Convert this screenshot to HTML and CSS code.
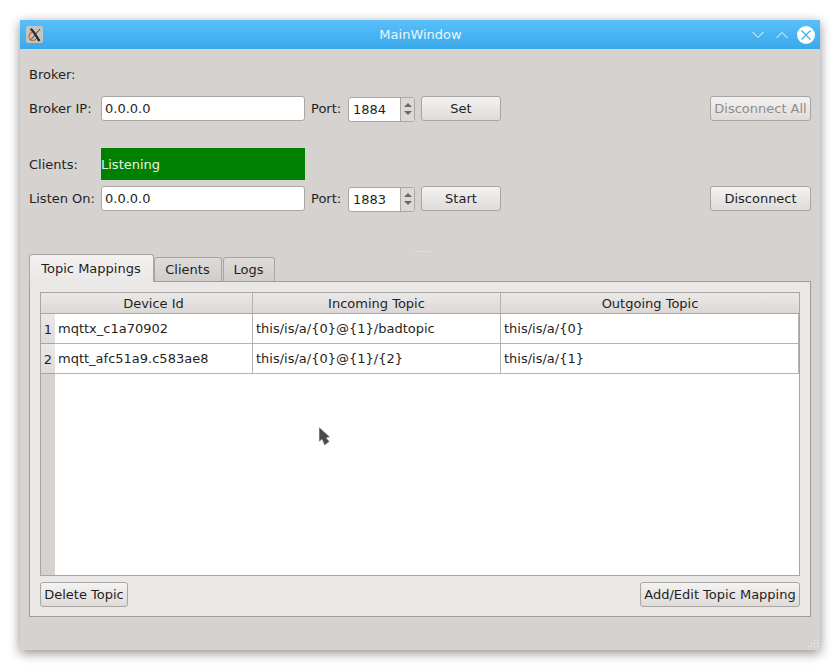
FILE: index.html
```html
<!DOCTYPE html>
<html lang="en">
<head>
<meta charset="utf-8">
<title>MainWindow</title>
<link rel="stylesheet" href="styles.css">
</head>
<body>
<div class="window">
  <header class="titlebar">
    <div class="app-icon">
      <svg width="16" height="16" viewBox="0 0 16 16"><path d="M7 5 C2 5 1 10 3 12.500 C5 14.500 8 13 9 12" fill="none" stroke="#e0672e" stroke-width="1.300"/><path d="M3.500 2 C7 3.500 8.500 9 12.500 14" fill="none" stroke="#2b2b2b" stroke-width="2.400"/><path d="M13 2 L4 12.500" fill="none" stroke="#3a3a3a" stroke-width="1"/></svg>
    </div>
    <div class="title">MainWindow</div>
    <div class="win-controls">
      <svg class="wc" width="12" height="8" viewBox="0 0 12 8"><path d="M.5 1 L6 6.500 L11.500 1" fill="none" stroke="#fff" stroke-width="1"/></svg>
      <svg class="wc" width="12" height="8" viewBox="0 0 12 8"><path d="M.5 7 L6 1.500 L11.500 7" fill="none" stroke="#fff" stroke-width="1"/></svg>
      <svg class="wc-close" width="18" height="18" viewBox="0 0 18 18"><circle cx="9" cy="9" r="9" fill="#fff"/><path d="M4.500 4.500 L13.500 13.500 M13.500 4.500 L4.500 13.500" stroke="#3daee9" stroke-width="1.200"/></svg>
    </div>
  </header>
  <main class="content">
    <div class="broker-heading">Broker:</div>
    <div class="form-row">
      <label class="field-label">Broker IP:</label>
      <div class="line-input">0.0.0.0</div>
      <label class="port-label">Port:</label>
      <div class="spin"><span class="spin-value">1884</span><span class="spin-btns"><i class="arrow-up"></i><i class="arrow-down"></i></span></div>
      <button class="btn btn-action">Set</button>
      <span class="spacer"></span>
      <button class="btn btn-side" disabled>Disconnect All</button>
    </div>
    <div class="status-row">
      <label class="field-label">Clients:</label>
      <div class="status">Listening</div>
    </div>
    <div class="form-row">
      <label class="field-label">Listen On:</label>
      <div class="line-input">0.0.0.0</div>
      <label class="port-label">Port:</label>
      <div class="spin"><span class="spin-value">1883</span><span class="spin-btns"><i class="arrow-up"></i><i class="arrow-down"></i></span></div>
      <button class="btn btn-action">Start</button>
      <span class="spacer"></span>
      <button class="btn btn-side">Disconnect</button>
    </div>
    <div class="splitter"></div>
    <div class="tabs">
      <div class="tab tab-active">Topic Mappings</div>
      <div class="tab tab-clients">Clients</div>
      <div class="tab tab-logs">Logs</div>
    </div>
    <section class="pane">
      <div class="table">
        <div class="thead">
          <div class="corner"></div>
          <div class="th col-a">Device Id</div>
          <div class="th col-b">Incoming Topic</div>
          <div class="th col-c">Outgoing Topic</div>
        </div>
        <div class="tbody">
          <div class="tr">
            <div class="row-head">1</div>
            <div class="td col-a">mqttx_c1a70902</div>
            <div class="td col-b">this/is/a/{0}@{1}/badtopic</div>
            <div class="td col-c">this/is/a/{0}</div>
          </div>
          <div class="tr">
            <div class="row-head">2</div>
            <div class="td col-a">mqtt_afc51a9.c583ae8</div>
            <div class="td col-b">this/is/a/{0}@{1}/{2}</div>
            <div class="td col-c">this/is/a/{1}</div>
          </div>
        </div>
      </div>
      <div class="pane-actions">
        <button class="btn btn-delete">Delete Topic</button>
        <button class="btn btn-add">Add/Edit Topic Mapping</button>
      </div>
    </section>
  </main>
  <svg class="cursor" width="14" height="22" viewBox="0 0 14 22"><path d="M1 1 L1 16 L4 13.500 L6.500 19.500 L11.500 15.500 L8.500 12 L12 11 Z" fill="#4a4a4a" stroke="#eeeeee" stroke-width=".6"/></svg>
  <svg class="grip" width="11" height="11" viewBox="0 0 11 11" fill="#f3f1f0"><rect x="9" y="0" width="1" height="1"/><rect x="6" y="3" width="1" height="1"/><rect x="9" y="3" width="1" height="1"/><rect x="3" y="6" width="1" height="1"/><rect x="6" y="6" width="1" height="1"/><rect x="9" y="6" width="1" height="1"/><rect x="0" y="9" width="1" height="1"/><rect x="3" y="9" width="1" height="1"/><rect x="6" y="9" width="1" height="1"/><rect x="9" y="9" width="1" height="1"/></svg>
</div>
</body>
</html>
```
FILE: styles.css
```css
* { box-sizing: border-box; }
html, body { margin: 0; height: 100%; }
body { background: #fff; padding: 20px; font: 13px "DejaVu Sans", sans-serif; color: #1f1f1f; overflow: hidden; }
.window { position: relative; width: 800px; height: 630px; background: #d6d2d0; box-shadow: 0 3px 12px rgba(0,0,0,.45); border-radius: 2px 2px 0 0; }
.titlebar { height: 29px; display: grid; grid-template-columns: 1fr auto 1fr; align-items: center; padding: 0 5px 0 6px; background: linear-gradient(#59bffb, #3aa9ea); color: #fff; }
.app-icon { width: 17px; height: 17px; background: #c4c4c0; border-radius: 2px; }
.app-icon svg { display: block; margin: 1px 0 0 1px; }
.title { text-align: center; color: #eaf5fc; }
.win-controls { display: flex; align-items: center; justify-content: flex-end; gap: 12px; }
.wc-close { margin-left: -3px; }
.content { padding: 0 9px; }
.broker-heading { height: 47px; padding-top: 18px; line-height: 16px; }
.form-row { display: flex; align-items: center; height: 25px; }
.field-label { width: 72px; flex: none; }
.line-input { width: 204px; height: 25px; background: #fff; border: 1px solid #aaa6a4; border-radius: 3px; padding-left: 3px; line-height: 23px; }
.port-label { width: 43px; padding-left: 6px; flex: none; }
.spin { width: 67px; height: 25px; display: flex; background: #fff; border: 1px solid #aaa6a4; border-radius: 3px; margin-top: 1px; }
.spin-value { flex: 1; padding-left: 4px; line-height: 24px; }
.spin-btns { width: 14px; background: #dcd9d7; border-left: 1px solid #aaa6a4; display: flex; flex-direction: column; align-items: center; justify-content: center; gap: 4px; border-radius: 0 2px 2px 0; }
.arrow-up { border: 4px solid transparent; border-top: 0; border-bottom: 4px solid #6a6866; }
.arrow-down { border: 4px solid transparent; border-bottom: 0; border-top: 4px solid #6a6866; }
.btn { height: 25px; padding: 0 3px; font: inherit; color: #1f1f1f; border: 1px solid #a9a5a3; border-radius: 3px; background: linear-gradient(#f4f3f2, #dedbd9); white-space: nowrap; }
.btn:disabled { color: #8f8c8b; }
.btn-action { width: 80px; margin-left: 6px; }
.btn-side { width: 101px; }
.btn-delete { width: 88px; }
.btn-add { width: 160px; }
.spacer { flex: 1; }
.status-row { display: flex; align-items: center; height: 32px; margin-top: 27px; margin-bottom: 6px; }
.status { width: 204px; height: 32px; background: #008000; color: #e9f2e6; line-height: 34px; }
.splitter { height: 43px; position: relative; }
.splitter::after { content: ""; position: absolute; left: 384px; top: 40px; width: 18px; height: 1px; background: repeating-linear-gradient(90deg, #f4f2f1 0 1px, transparent 1px 3px); }
.tabs { display: flex; height: 27px; align-items: flex-end; position: relative; z-index: 1; }
.tab { height: 24px; padding: 3px 1px 0 0; text-align: center; line-height: 18px; background: linear-gradient(#dedbd9, #d0cdcb); border: 1px solid #a9a5a3; border-bottom: 0; border-radius: 3px 3px 0 0; }
.tab-active { width: 125px; height: 28px; background: linear-gradient(#f3f2f1, #e9e8e7); margin-bottom: -1px; padding-top: 5px; }
.tab-clients { width: 68px; }
.tab-logs { width: 52px; margin-left: 1px; }
.pane { height: 336px; border: 1px solid #a09c9a; background: #e9e8e7; padding: 10px 10px 0; }
.table { height: 284px; border: 1px solid #a9a5a3; background: #fff; display: flex; flex-direction: column; }
.thead { display: flex; height: 21px; flex: none; background: linear-gradient(#ebe9e8, #dbd8d6); border-bottom: 1px solid #a9a5a3; }
.corner { width: 14px; flex: none; }
.th { text-align: center; line-height: 22px; border-right: 1px solid #b5b2b0; }
.col-a { width: 198px; flex: none; }
.col-b { width: 248px; flex: none; }
.col-c { width: 298px; flex: none; }
.thead .col-c { border-right: 0; }
.tbody { flex: 1; background: linear-gradient(90deg, #d6d2d0 14px, #fff 14px); }
.tr { display: flex; height: 30px; }
.row-head { width: 14px; flex: none; text-align: center; line-height: 31px; background: linear-gradient(#ebe9e8, #dedbd9); border-bottom: 1px solid #a9a5a3; }
.td { padding-left: 3px; line-height: 29px; border-right: 1px solid #b5b2b0; border-bottom: 1px solid #b5b2b0; background: #fff; }
.pane-actions { display: flex; justify-content: space-between; margin-top: 6px; }
.cursor { position: absolute; left: 298px; top: 406px; }
.grip { position: absolute; right: 1px; bottom: 2px; }
```
